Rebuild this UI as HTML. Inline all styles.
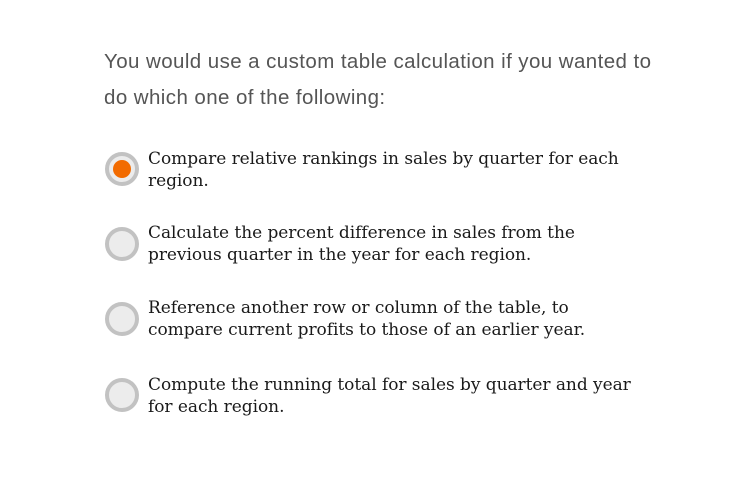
<!DOCTYPE html>
<html><head><style>
body{margin:0;width:731px;height:493px;background:#fff;overflow:hidden}
.q{position:absolute;left:104px;top:44px;width:620px;font:300 20.5px/36px "Liberation Sans",sans-serif;color:#555;letter-spacing:0.42px;white-space:nowrap}
.opt{position:absolute;left:105px;width:600px}
.r{position:absolute;left:0;width:26px;height:26px;border:4px solid #c2c2c2;border-radius:50%;background:#ececec}
.r.on::after{content:"";position:absolute;left:4px;top:4px;width:18px;height:18px;border-radius:50%;background:#f26b00}
.t{position:absolute;left:43px;top:0;white-space:nowrap;font:17px/22px "DejaVu Serif",serif;color:#1a1a1a;letter-spacing:-0.05px}
</style></head><body>
<div class="q">You would use a custom table calculation if you wanted to<br>do which one of the following:</div>
<div class="opt" style="top:148px"><div class="r on" style="top:4px"></div><div class="t">Compare relative rankings in sales by quarter for each<br>region.</div></div>
<div class="opt" style="top:222px"><div class="r" style="top:5px"></div><div class="t">Calculate the percent difference in sales from the<br>previous quarter in the year for each region.</div></div>
<div class="opt" style="top:297px"><div class="r" style="top:5px"></div><div class="t">Reference another row or column of the table, to<br>compare current profits to those of an earlier year.</div></div>
<div class="opt" style="top:374px"><div class="r" style="top:4px"></div><div class="t">Compute the running total for sales by quarter and year<br>for each region.</div></div>
</body></html>
